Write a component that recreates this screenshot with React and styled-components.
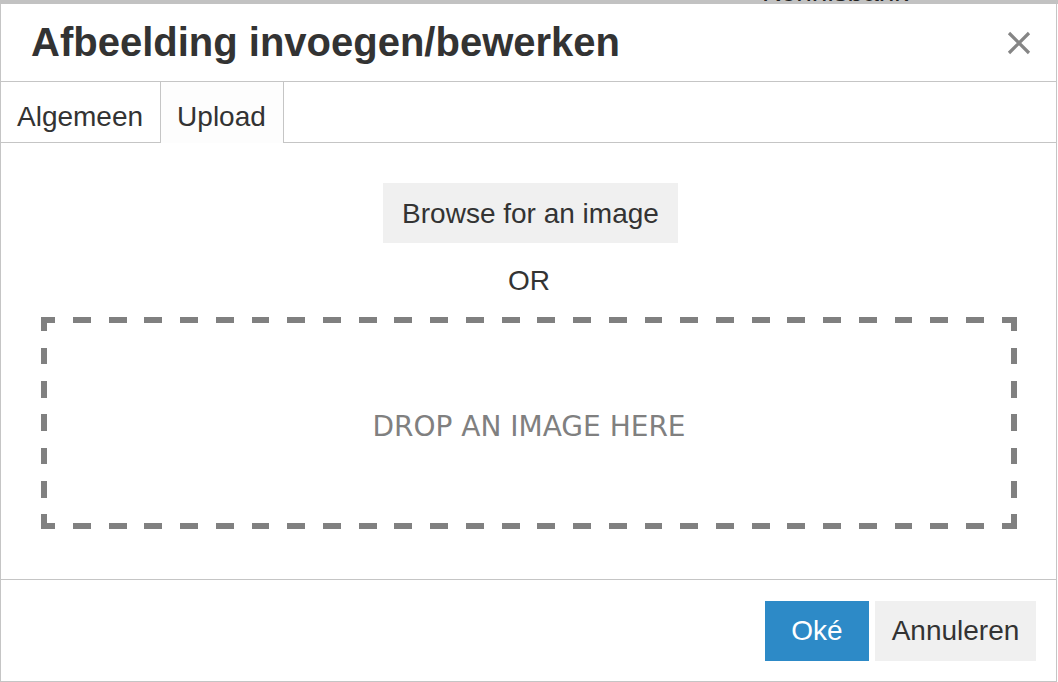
import React from "react"
import styled, { createGlobalStyle } from "styled-components"

const GlobalStyle = createGlobalStyle`
  body {
    margin: 0;
    background: #fff;
    font-family: "Liberation Sans", Arial, sans-serif;
    color: #333;
  }
`

// Page behind the dialog
const BackStrip = styled.div`
  height: 4px;
  overflow: hidden;
  background: #c2c2c2;
  padding-left: 762px;
`

const BackText = styled.span`
  display: block;
  margin-top: -24px;
  font-size: 28px;
  line-height: 32px;
  color: #222;
`

const Dialog = styled.div`
  width: 1057px;
  height: 678px;
  box-sizing: border-box;
  border: 1px solid #c5c5c5;
  border-top: none;
  display: flex;
  flex-direction: column;
  background: #fff;
`

const Head = styled.div`
  height: 78px;
  box-sizing: border-box;
  border-bottom: 1px solid #c5c5c5;
  display: flex;
  align-items: center;
  justify-content: space-between;
  padding: 0 25px 0 30px;
`

const Title = styled.h1`
  margin: 0;
  font-size: 40px;
  font-weight: bold;
  color: #333;
`

const Close = styled.button`
  border: 0;
  background: none;
  padding: 0;
  width: 24px;
  height: 24px;
  display: flex;
  cursor: pointer;
`

const Tabs = styled.div`
  display: flex;
  height: 61px;
  box-sizing: border-box;
  border-bottom: 1px solid #c5c5c5;
`

const Tab = styled.div`
  box-sizing: border-box;
  height: ${(p) => (p.$active ? "61px" : "60px")};
  padding: 19px 17px 0 16px;
  font-size: 28px;
  line-height: 32px;
  border-right: 1px solid #c5c5c5;
  background: ${(p) => (p.$active ? "#fdfdfd" : "#fff")};
  color: #333;
`

const Body = styled.div`
  flex: 1;
  display: flex;
  flex-direction: column;
  align-items: center;
  padding: 40px 39px 0 40px;
  border-bottom: 1px solid #c5c5c5;
`

const BrowseButton = styled.button`
  border: 0;
  background: #f0f0f0;
  width: 295px;
  height: 60px;
  padding: 2px 0 0;
  margin-left: 3px;
  font-family: "Liberation Sans", Arial, sans-serif;
  font-size: 28px;
  color: #333;
`

const Or = styled.div`
  margin-top: 22px;
  font-size: 28px;
  line-height: 32px;
  color: #333;
`

const dashH =
  "repeating-linear-gradient(90deg, #808080 -3.72px 14.14px, transparent 14.14px 32px)"
const dashV =
  "repeating-linear-gradient(180deg, #808080 -2.6px 14.05px, transparent 14.05px 30.7px)"

const DropZone = styled.div`
  margin-top: 20px;
  align-self: stretch;
  height: 212px;
  box-sizing: border-box;
  padding-top: 6px;
  background:
    ${dashH} top left / 100% 6px no-repeat,
    ${dashH} bottom left / 100% 6px no-repeat,
    ${dashV} top left / 6px 100% no-repeat,
    ${dashV} top right / 6px 100% no-repeat;
  display: flex;
  align-items: center;
  justify-content: center;
  font-family: "DejaVu Sans", Verdana, sans-serif;
  font-size: 28px;
  color: #808080;
`

const Foot = styled.div`
  height: 101px;
  box-sizing: border-box;
  display: flex;
  justify-content: flex-end;
  align-items: flex-start;
  gap: 6px;
  padding: 21px 20px 0 0;
`

const Button = styled.button`
  border: 0;
  width: ${(p) => (p.$primary ? "104px" : "161px")};
  height: 60px;
  padding: 0;
  font-family: "Liberation Sans", Arial, sans-serif;
  font-size: 28px;
  background: ${(p) => (p.$primary ? "#2d8ac7" : "#f0f0f0")};
  color: ${(p) => (p.$primary ? "#fff" : "#333")};
`

const App = () => {
  return (
    <>
      <GlobalStyle />
      <BackStrip>
        <BackText>Kennisbank</BackText>
      </BackStrip>
      <Dialog>
        <Head>
          <Title>Afbeelding invoegen/bewerken</Title>
          <Close aria-label="Sluiten">
            <svg width="24" height="24" viewBox="0 0 24 24">
              <path
                d="M2 2 L22 22 M22 2 L2 22"
                stroke="#858585"
                strokeWidth="3.2"
                fill="none"
              />
            </svg>
          </Close>
        </Head>
        <Tabs>
          <Tab>Algemeen</Tab>
          <Tab $active>Upload</Tab>
        </Tabs>
        <Body>
          <BrowseButton>Browse for an image</BrowseButton>
          <Or>OR</Or>
          <DropZone>DROP AN IMAGE HERE</DropZone>
        </Body>
        <Foot>
          <Button $primary>Oké</Button>
          <Button>Annuleren</Button>
        </Foot>
      </Dialog>
    </>
  )
}

export default App
